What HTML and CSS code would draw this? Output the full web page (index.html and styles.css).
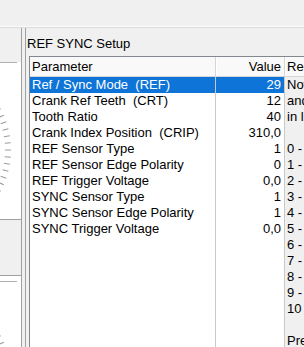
FILE: index.html
```html
<!DOCTYPE html>
<html lang="en">
<head>
  <meta charset="UTF-8">
  <title>REF SYNC Setup</title>
  <link rel="stylesheet" href="styles.css">
</head>
<body>

  <div class="toolbar"></div>

  <div class="main">

    <!-- gauge strip, mostly scrolled off to the left -->
    <div class="gauges">
      <div class="gauge gauge-one">
        <div class="rim"></div>
        <svg class="ticks" width="21" height="156" viewBox="0 0 21 156">
          <g transform="translate(-77 87)" stroke="#9a9a9a" stroke-width="1">
            <line x1="82" y1="0" x2="88" y2="0" transform="rotate(-28)"/>
            <line x1="82" y1="0" x2="88" y2="0" transform="rotate(-23.3)"/>
            <line x1="82" y1="0" x2="88" y2="0" transform="rotate(-18.7)"/>
            <line x1="82" y1="0" x2="88" y2="0" transform="rotate(-14)"/>
            <line x1="82" y1="0" x2="88" y2="0" transform="rotate(-9.3)"/>
            <line x1="82" y1="0" x2="88" y2="0" transform="rotate(-4.7)"/>
            <line x1="82" y1="0" x2="88" y2="0"/>
            <line x1="82" y1="0" x2="88" y2="0" transform="rotate(4.7)"/>
            <line x1="82" y1="0" x2="88" y2="0" transform="rotate(9.3)"/>
            <line x1="82" y1="0" x2="88" y2="0" transform="rotate(14)"/>
            <line x1="82" y1="0" x2="88" y2="0" transform="rotate(18.7)"/>
            <line x1="82" y1="0" x2="88" y2="0" transform="rotate(23.3)"/>
            <line x1="82" y1="0" x2="88" y2="0" transform="rotate(28)"/>
          </g>
        </svg>
      </div>
      <div class="gauge-gap"></div>
      <div class="gauge gauge-two">
        <div class="rim"></div>
        <svg class="ticks" width="21" height="70" viewBox="0 0 21 70">
          <g transform="translate(-77 95)" stroke="#9a9a9a" stroke-width="1">
            <line x1="82" y1="0" x2="88" y2="0" transform="rotate(-28)"/>
            <line x1="82" y1="0" x2="88" y2="0" transform="rotate(-23.3)"/>
          </g>
        </svg>
      </div>
    </div>

    <div class="splitter"></div>

    <div class="setup">
      <div class="setup-title">REF SYNC Setup</div>

      <div class="grid">
        <div class="grid-head">
          <div class="hc col-param">Parameter</div>
          <div class="hc col-value">Value</div>
          <div class="hc col-desc">Remarks</div>
        </div>

        <div class="grid-body">
          <div class="col col-param">
            <div class="cell sel">Ref / Sync Mode  (REF)</div>
            <div class="cell">Crank Ref Teeth  (CRT)</div>
            <div class="cell">Tooth Ratio</div>
            <div class="cell">Crank Index Position  (CRIP)</div>
            <div class="cell">REF Sensor Type</div>
            <div class="cell">REF Sensor Edge Polarity</div>
            <div class="cell">REF Trigger Voltage</div>
            <div class="cell">SYNC Sensor Type</div>
            <div class="cell">SYNC Sensor Edge Polarity</div>
            <div class="cell">SYNC Trigger Voltage</div>
          </div>
          <div class="col col-value">
            <div class="cell sel">29</div>
            <div class="cell">12</div>
            <div class="cell">40</div>
            <div class="cell">310,0</div>
            <div class="cell">1</div>
            <div class="cell">0</div>
            <div class="cell">0,0</div>
            <div class="cell">1</div>
            <div class="cell">1</div>
            <div class="cell">0,0</div>
          </div>
          <div class="col col-desc">
            <div class="line">Note: select the mode</div>
            <div class="line">and sensor setup</div>
            <div class="line">in list below.</div>
            <div class="line"></div>
            <div class="line">0 - None</div>
            <div class="line">1 - Hall</div>
            <div class="line">2 - Inductive</div>
            <div class="line">3 - Optical</div>
            <div class="line">4 - Cam</div>
            <div class="line">5 - Crank</div>
            <div class="line">6 - Missing tooth</div>
            <div class="line">7 - Dual wheel</div>
            <div class="line">8 - Nippon</div>
            <div class="line">9 - Custom</div>
            <div class="line">10 - User</div>
            <div class="line"></div>
            <div class="line">Press Enter to edit</div>
          </div>
        </div>
      </div>
    </div>

  </div>

</body>
</html>
```

FILE: styles.css
```css
* {
  box-sizing: border-box;
}

html, body {
  height: 347px;
  overflow: hidden;
}

body {
  margin: 0;
  background-color: #f0f0f0;
  color: #000;
  font-family: "Liberation Sans", Arial, sans-serif;
  font-size: 13px;
  line-height: 16px;
}

.toolbar {
  height: 27px;
  border-bottom: 1px solid #fcfcfc;
}

.main {
  display: flex;
  height: 320px;
  border-top: 1px solid #dadada;
}

/* left strip with the dials */
.gauges {
  width: 22px;
  flex-shrink: 0;
  display: flex;
  flex-direction: column;
  padding-top: 34px;
  border-right: 1px solid #a0a0a0;
}

.gauge {
  background-color: #fff;
  overflow: hidden;
}

.gauge-one {
  height: 158px;
  border-bottom: 1px solid #a0a0a0;
}

.gauge-gap {
  height: 55px;
}

.gauge-two {
  flex: 1;
  border-top: 1px solid #a0a0a0;
  padding-top: 5px;
}

.rim {
  width: 17px;
  height: 1px;
  background-color: #b0b0b0;
}

.ticks {
  display: block;
}

.splitter {
  width: 3px;
  flex-shrink: 0;
}

/* setup panel */
.setup {
  flex: 1;
  min-width: 0;
  display: flex;
  flex-direction: column;
  padding: 8px 0 0 3px;
  border-left: 1px solid #a0a0a0;
}

.setup-title {
  margin: 0 0 4px -2px;
  white-space: nowrap;
}

.grid {
  flex: 1;
  display: flex;
  flex-direction: column;
  border-left: 1px solid #828790;
  border-top: 1px solid #828790;
  background-color: #fff;
  overflow: hidden;
}

.grid-head {
  display: flex;
  height: 20px;
  background-color: #f9f9f9;
  border-bottom: 1px solid #d5d5d5;
  flex-shrink: 0;
}

.hc {
  line-height: 19px;
  white-space: nowrap;
  overflow: hidden;
}

.grid-head .col-param,
.grid-head .col-value {
  border-right: 1px solid #d5d5d5;
  box-shadow: 1px 0 0 #fff;
}

.grid-body {
  flex: 1;
  display: flex;
}

.col-param {
  width: 186px;
  flex-shrink: 0;
  padding-left: 2px;
}

.col-value {
  width: 69px;
  flex-shrink: 0;
  padding-right: 3px;
  text-align: right;
}

.col-desc {
  flex: 1;
  min-width: 0;
  padding-left: 2px;
  overflow: hidden;
}

.grid-body .col-param,
.grid-body .col-value {
  border-right: 1px solid #c9c9c9;
}

.grid-body .col-param {
  padding-left: 0;
}

.grid-body .col-value {
  padding-right: 0;
}

.grid-body .col-desc {
  background-color: #f0f0f0;
}

.cell {
  height: 16px;
  white-space: pre;
  overflow: hidden;
}

.col-param .cell {
  padding-left: 2px;
}

.col-value .cell {
  padding-right: 3px;
}

.cell.sel {
  background-color: #0e74d8;
  color: #fff;
}

.line {
  height: 16px;
  white-space: nowrap;
}
```
